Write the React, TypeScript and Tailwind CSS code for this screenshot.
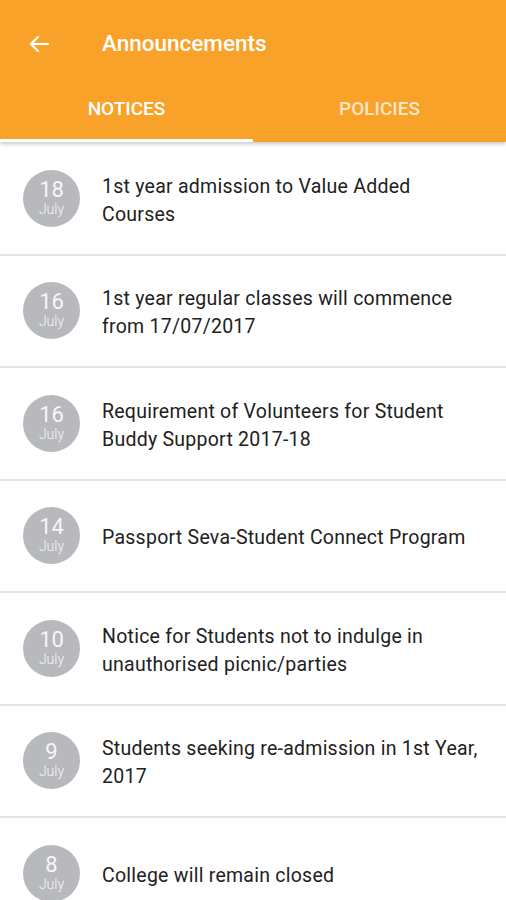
import React from "react";

const items = [
  { d: "18", t: ["1st year admission to Value Added", "Courses"] },
  { d: "16", t: ["1st year regular classes will commence", "from 17/07/2017"] },
  { d: "16", t: ["Requirement of Volunteers for Student", "Buddy Support 2017-18"] },
  { d: "14", t: ["Passport Seva-Student Connect Program"] },
  { d: "10", t: ["Notice for Students not to indulge in", "unauthorised picnic/parties"] },
  { d: "9", t: ["Students seeking re-admission in 1st Year,", "2017"] },
  { d: "8", t: ["College will remain closed"] },
];

export default function App() {
  return (
    <div className="w-[506px] h-[900px] overflow-hidden bg-white" style={{ fontFamily: "Roboto, 'Liberation Sans', sans-serif" }}>
      <div className="relative z-10 bg-[#F9A229] shadow-[0_2px_4px_rgba(0,0,0,0.22)]">
        <div className="h-[88px] flex items-center">
          <div className="w-[102px] pl-[26px]">
            <svg width="26" height="26" viewBox="0 0 24 24" fill="none" stroke="white" strokeWidth="2" strokeLinecap="square">
              <path d="M20 12H5" />
              <path d="M11 5.5L4.5 12L11 18.5" />
            </svg>
          </div>
          <div className="text-white text-[22.5px] font-medium">Announcements</div>
        </div>
        <div className="h-[54px] flex">
          <div className="flex-1 flex flex-col">
            <div className="flex-1 flex justify-center pt-[7px] text-white text-[19px] font-medium">NOTICES</div>
            <div className="h-[3px] bg-white"></div>
          </div>
          <div className="flex-1 flex flex-col">
            <div className="flex-1 flex justify-center pt-[7px] text-white/75 text-[19px] font-medium">POLICIES</div>
            <div className="h-[3px]"></div>
          </div>
        </div>
      </div>
      <div className="pt-[1px]">
        {items.map((it, i) => (
          <div key={i} className="h-[112.5px] border-b-2 border-[#E4E4E4] flex items-center">
            <div className="ml-[23px] w-[57px] h-[57px] rounded-full bg-[#B7B9BD] flex flex-col items-center justify-center text-[#F7F7F7]">
              <div className="text-[22px] leading-[22px]">{it.d}</div>
              <div className="text-[14px] leading-[17px] font-light">July</div>
            </div>
            <div className="ml-[22px] mt-[5px] text-[19.5px] leading-[28px] tracking-[0.25px] text-[#212121] whitespace-nowrap">
              {it.t.map((l, j) => (
                <div key={j}>{l}</div>
              ))}
            </div>
          </div>
        ))}
      </div>
    </div>
  );
}
